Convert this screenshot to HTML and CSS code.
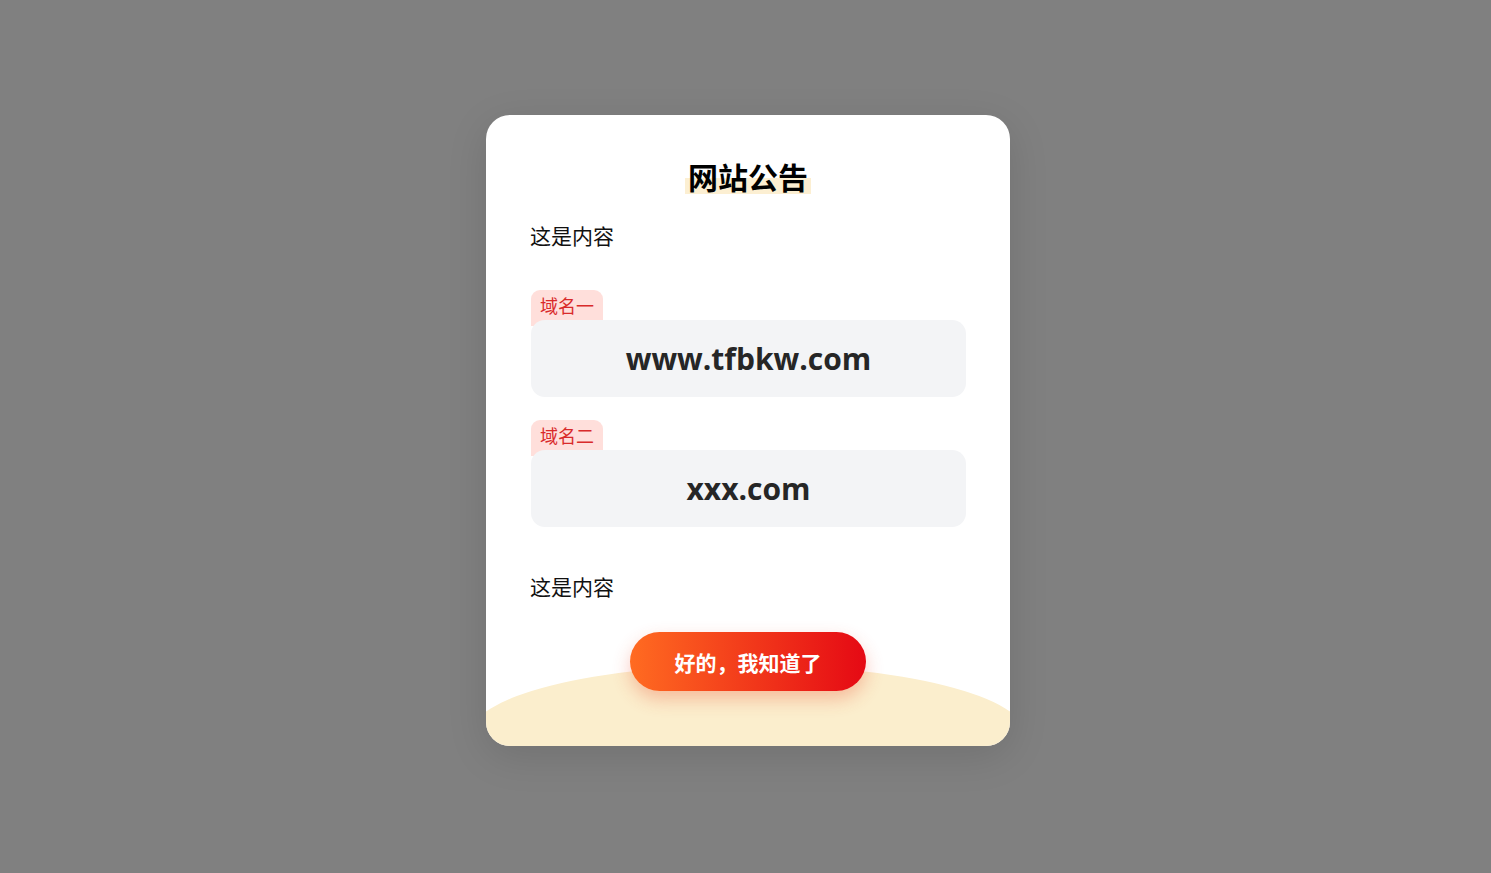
FILE: index.html
```html
<!DOCTYPE html>
<html lang="zh-CN">
<head>
<meta charset="utf-8">
<title>网站公告</title>
<link rel="stylesheet" href="styles.css">
</head>
<body>
<div class="overlay">
  <div class="card">
    <h2 class="title"><span class="title-mark">网站公告</span></h2>
    <p class="content first">这是内容</p>
    <div class="domain">
      <span class="tag">域名一</span>
      <div class="domain-box">www.tfbkw.com</div>
    </div>
    <div class="domain">
      <span class="tag">域名二</span>
      <div class="domain-box">xxx.com</div>
    </div>
    <p class="content second">这是内容</p>
    <div class="footer">
      <button class="ok-btn" type="button">好的，我知道了</button>
    </div>
  </div>
</div>
</body>
</html>
```

FILE: styles.css
```css
* { box-sizing: border-box; }
html, body { margin: 0; padding: 0; }
body {
  background: #808080;
  font-family: "Noto Sans CJK SC", "Noto Sans", sans-serif;
}
.overlay {
  height: 873px;
  display: flex;
  align-items: center;
  justify-content: center;
  padding-bottom: 12px;
  padding-left: 5px;
}
.card {
  width: 524px;
  background: #ffffff;
  border-radius: 24px;
  padding: 41px 44px 55px;
  position: relative;
  overflow: hidden;
  box-shadow: 0 10px 40px rgba(0, 0, 0, 0.12);
}
.title {
  margin: 0;
  text-align: center;
  font-size: 30px;
  line-height: 40px;
  font-weight: 700;
  color: #000;
}
.title-mark {
  padding: 0 3px;
  border-radius: 4px;
  background: linear-gradient(to bottom, transparent 55%, #fcefd2 55%, #fcefd2 90%, transparent 90%);
}
.content {
  margin: 0;
  font-size: 21px;
  line-height: 30px;
  color: #111;
}
.content.first { margin-top: 24px; margin-bottom: 40px; }
.content.second { margin-top: 44px; }
.domain { margin-left: 1px; }
.domain + .domain { margin-top: 23px; }
.tag {
  display: inline-block;
  height: 36px;
  margin-bottom: -6px;
  padding: 0 9px;
  font-size: 18px;
  line-height: 30px;
  color: #d92a2a;
  background: #ffdfdb;
  border-radius: 9px 9px 0 0;
  vertical-align: top;
}
.domain-box {
  position: relative;
  height: 77px;
  background: #f3f4f6;
  border-radius: 14px;
  text-align: center;
  font-family: "Open Sans", "Noto Sans", sans-serif;
  font-weight: 700;
  font-size: 30px;
  line-height: 77px;
  color: #262626;
}
.footer {
  display: flex;
  justify-content: center;
  margin-top: 31px;
  position: relative;
}
.footer::before {
  content: "";
  position: absolute;
  left: 50%;
  top: 33px;
  width: 556px;
  height: 140px;
  margin-left: -278px;
  background: #fbeecd;
  border-radius: 50%;
}
.ok-btn {
  position: relative;
  width: 236px;
  height: 59px;
  border: 0;
  border-radius: 30px;
  background: linear-gradient(to right, #ff6b21, #e50914);
  color: #fff;
  font-family: "Noto Sans CJK SC", sans-serif;
  font-size: 21px;
  font-weight: 700;
  box-shadow: 0 8px 18px rgba(235, 70, 40, 0.3);
  cursor: pointer;
}
```
